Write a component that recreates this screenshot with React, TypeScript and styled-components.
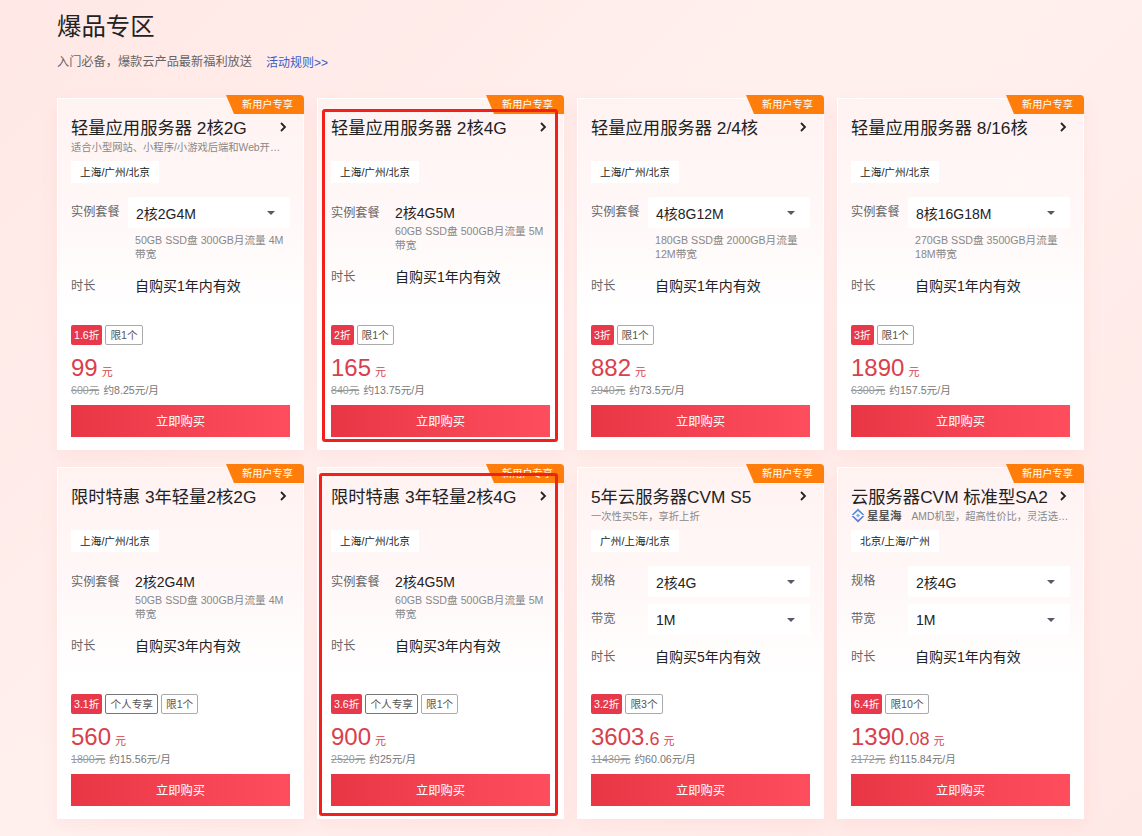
import React from 'react';
import styled, { createGlobalStyle } from 'styled-components';

const GlobalStyle = createGlobalStyle`
  html, body {
    margin: 0;
    padding: 0;
  }
  body {
    font-family: "Liberation Sans", "Noto Sans CJK SC", sans-serif;
    background: #fff;
  }
  * {
    box-sizing: border-box;
  }
`;

const Page = styled.div`
  width: 1142px;
  height: 836px;
  overflow: hidden;
  padding: 12px 0 0 57px;
  background: linear-gradient(135deg, #ffe8e5 0%, #fff0ee 45%, #ffe9e6 100%);
`;

const Heading = styled.h2`
  margin: 0;
  font-size: 24.4px;
  line-height: 30px;
  font-weight: 400;
  color: #222;
`;

const Intro = styled.div`
  display: flex;
  align-items: center;
  margin-top: 10px;
  height: 18px;
  font-size: 12.2px;
  color: #666;
`;

const RuleLink = styled.a`
  margin-left: 14px;
  font-size: 12px;
  color: #3b5bc9;
`;

const Grid = styled.div`
  display: grid;
  grid-template-columns: repeat(4, 247px);
  grid-auto-rows: 352px;
  column-gap: 13px;
  row-gap: 17px;
  margin-top: 28px;
`;

const Card = styled.div`
  position: relative;
  display: flex;
  flex-direction: column;
  padding: 16px 13px 12px;
  background: linear-gradient(180deg, #fff3f2 0%, #fff8f8 35%, #ffffff 60%);
  border: 1px solid #fff;
  box-shadow: 0 6px 16px rgba(240, 150, 145, 0.12);
`;

const Ribbon = styled.div`
  position: absolute;
  top: -4px;
  right: -1px;
  width: 78px;
  height: 19px;
  padding-left: 16px;
  font-size: 10.2px;
  line-height: 19px;
  color: #fff;
  background: #ff7d0a;
  border-radius: 0 4px 0 0;
  clip-path: polygon(0 0, 100% 0, 100% 100%, 8px 100%);
`;

const Frame = styled.div<{ $left: number; $top: number; $right: number; $bottom: number }>`
  position: absolute;
  left: ${(p) => p.$left}px;
  top: ${(p) => p.$top}px;
  right: ${(p) => p.$right}px;
  bottom: ${(p) => p.$bottom}px;
  border: 3px solid #f1201a;
  border-radius: 3px;
  pointer-events: none;
`;

const TitleRow = styled.div`
  display: flex;
  align-items: center;
  justify-content: space-between;
  height: 22px;
  font-size: 17.3px;
  color: #222;
  white-space: nowrap;
`;

const Chevron = styled.svg`
  width: 10px;
  height: 12px;
  margin: 1px 2px 0 0;
  flex: none;
`;

const Subtitle = styled.div`
  display: flex;
  align-items: center;
  height: 14px;
  margin-top: 2px;
  font-size: 10.3px;
  color: #888;
  white-space: nowrap;
`;

const Brand = styled.span`
  display: inline-flex;
  align-items: center;
  gap: 2px;
  margin-right: 10px;
  font-size: 11.5px;
  font-weight: 700;
  color: #555;
  flex: none;
`;

const Region = styled.div`
  align-self: flex-start;
  width: 88px;
  height: 22px;
  margin-top: 8px;
  font-size: 10.65px;
  line-height: 22px;
  text-align: center;
  color: #222;
  background: #fff;
`;

const Specs = styled.div<{ $plain?: boolean }>`
  display: flex;
  flex-direction: column;
  margin-top: ${(p) => (p.$plain ? 15 : 14)}px;
`;

const SpecRow = styled.div<{ $gap: number }>`
  display: flex;
  margin-bottom: ${(p) => p.$gap}px;
`;

const Label = styled.div<{ $wide?: boolean }>`
  flex: none;
  width: ${(p) => (p.$wide ? 64 : 57)}px;
  font-size: 12.2px;
  line-height: 30px;
  color: #666;
`;

const SelectBox = styled.div`
  display: flex;
  align-items: center;
  justify-content: space-between;
  width: 162px;
  height: 31px;
  padding: 0 15px 0 8px;
  font-size: 14px;
  color: #222;
  background: #fff;
  border-radius: 2px;
`;

const Caret = styled.span`
  width: 0;
  height: 0;
  border-left: 4px solid transparent;
  border-right: 4px solid transparent;
  border-top: 4px solid #555b66;
`;

const ValueColumn = styled.div`
  display: flex;
  flex-direction: column;
  padding-top: 7px;
  min-width: 0;
`;

const PlainValue = styled.div`
  font-size: 14px;
  line-height: 16px;
  color: #222;
`;

const Note = styled.div`
  font-size: 10.65px;
  line-height: 14px;
  color: #888;
`;

const SelectNote = styled(Note)`
  margin: -2px 0 10px;
  padding-left: 64px;
`;

const PlainNote = styled(Note)`
  margin-top: 3px;
`;

const Bottom = styled.div`
  margin-top: auto;
`;

const Tags = styled.div`
  display: flex;
  gap: 3px;
`;

const Discount = styled.span`
  height: 20px;
  padding: 0 3px;
  font-size: 10.65px;
  line-height: 20px;
  color: #fff;
  background: #e8394a;
  border-radius: 2px;
`;

const Tag = styled.span<{ $dark?: boolean }>`
  height: 20px;
  padding: 0 4px;
  font-size: 10.65px;
  line-height: 18px;
  color: #555;
  border: 1px solid ${(p) => (p.$dark ? '#777' : '#aaa')};
  border-radius: 2px;
`;

const PriceLine = styled.div`
  display: flex;
  align-items: baseline;
  height: 30px;
  margin-top: 8px;
  color: #d93f4c;
  font-size: 24px;
  line-height: 30px;
`;

const Cents = styled.span`
  font-size: 18px;
`;

const Unit = styled.span`
  margin-left: 4px;
  font-size: 11px;
`;

const PriceNote = styled.div`
  display: flex;
  gap: 4px;
  height: 14px;
  font-size: 10.65px;
  line-height: 14px;
  color: #777;
`;

const OldPrice = styled.span`
  color: #999;
  text-decoration: line-through;
`;

const BuyButton = styled.button`
  display: block;
  width: 100%;
  height: 32px;
  margin-top: 8px;
  padding: 0;
  border: 0;
  font: inherit;
  font-size: 12.3px;
  color: #fff;
  background: linear-gradient(90deg, #e93645 0%, #fe4e5e 100%);
`;

interface Product {
  title: string;
  subtitle?: string;
  brand?: boolean;
  region: string;
  selects?: [string, string][];
  plan?: string;
  note?: string;
  duration: string;
  discount: string;
  personal?: boolean;
  limit: string;
  price: string;
  cents?: string;
  oldPrice: string;
  monthly: string;
  frame?: [number, number, number, number];
}

const LIGHT_REGION = '上海/广州/北京';

const products: Product[] = [
  {
    title: '轻量应用服务器 2核2G',
    subtitle: '适合小型网站、小程序/小游戏后端和Web开…',
    region: LIGHT_REGION,
    selects: [['实例套餐', '2核2G4M']],
    note: '50GB SSD盘 300GB月流量 4M带宽',
    duration: '自购买1年内有效',
    discount: '1.6折',
    limit: '限1个',
    price: '99',
    oldPrice: '600元',
    monthly: '约8.25元/月',
  },
  {
    title: '轻量应用服务器 2核4G',
    region: LIGHT_REGION,
    plan: '2核4G5M',
    note: '60GB SSD盘 500GB月流量 5M带宽',
    duration: '自购买1年内有效',
    discount: '2折',
    limit: '限1个',
    price: '165',
    oldPrice: '840元',
    monthly: '约13.75元/月',
    frame: [4, 10, 5, 7],
  },
  {
    title: '轻量应用服务器 2/4核',
    region: LIGHT_REGION,
    selects: [['实例套餐', '4核8G12M']],
    note: '180GB SSD盘 2000GB月流量 12M带宽',
    duration: '自购买1年内有效',
    discount: '3折',
    limit: '限1个',
    price: '882',
    oldPrice: '2940元',
    monthly: '约73.5元/月',
  },
  {
    title: '轻量应用服务器 8/16核',
    region: LIGHT_REGION,
    selects: [['实例套餐', '8核16G18M']],
    note: '270GB SSD盘 3500GB月流量 18M带宽',
    duration: '自购买1年内有效',
    discount: '3折',
    limit: '限1个',
    price: '1890',
    oldPrice: '6300元',
    monthly: '约157.5元/月',
  },
  {
    title: '限时特惠 3年轻量2核2G',
    region: LIGHT_REGION,
    plan: '2核2G4M',
    note: '50GB SSD盘 300GB月流量 4M带宽',
    duration: '自购买3年内有效',
    discount: '3.1折',
    personal: true,
    limit: '限1个',
    price: '560',
    oldPrice: '1800元',
    monthly: '约15.56元/月',
  },
  {
    title: '限时特惠 3年轻量2核4G',
    region: LIGHT_REGION,
    plan: '2核4G5M',
    note: '60GB SSD盘 500GB月流量 5M带宽',
    duration: '自购买3年内有效',
    discount: '3.6折',
    personal: true,
    limit: '限1个',
    price: '900',
    oldPrice: '2520元',
    monthly: '约25元/月',
    frame: [1, 5, 5, 2],
  },
  {
    title: '5年云服务器CVM S5',
    subtitle: '一次性买5年，享折上折',
    region: '广州/上海/北京',
    selects: [
      ['规格', '2核4G'],
      ['带宽', '1M'],
    ],
    duration: '自购买5年内有效',
    discount: '3.2折',
    limit: '限3个',
    price: '3603',
    cents: '.6',
    oldPrice: '11430元',
    monthly: '约60.06元/月',
  },
  {
    title: '云服务器CVM 标准型SA2',
    subtitle: 'AMD机型，超高性价比，灵活选…',
    brand: true,
    region: '北京/上海/广州',
    selects: [
      ['规格', '2核4G'],
      ['带宽', '1M'],
    ],
    duration: '自购买1年内有效',
    discount: '6.4折',
    limit: '限10个',
    price: '1390',
    cents: '.08',
    oldPrice: '2172元',
    monthly: '约115.84元/月',
  },
];

const BrandMark = () => (
  <svg width="14" height="15" viewBox="0 0 14 15">
    <path d="M7 0.5 L13.5 7 L11.4 7 L7 3 L2.6 7 L0.5 7 Z" fill="#4f8fe0" />
    <path d="M0.5 8 L7 14.5 L13.5 8 L11.4 8 L7 12 L2.6 8 Z" fill="#5b7fd8" />
    <path d="M7 5.5 L9 7.5 L7 9.5 L5 7.5 Z" fill="#6fb3ea" />
  </svg>
);

const ProductCard = ({ product }: { product: Product }) => {
  const { selects, frame } = product;

  return (
    <Card>
      <Ribbon>新用户专享</Ribbon>
      <TitleRow>
        {product.title}
        <Chevron viewBox="0 0 10 12">
          <path d="M3 2 L7 6 L3 10" fill="none" stroke="#222" strokeWidth="1.8" />
        </Chevron>
      </TitleRow>
      <Subtitle>
        {product.brand && (
          <Brand>
            <BrandMark />
            星星海
          </Brand>
        )}
        {product.subtitle}
      </Subtitle>
      <Region>{product.region}</Region>
      <Specs $plain={!!product.plan}>
        {selects &&
          selects.map(([label, value]) => (
            <SpecRow key={label} $gap={7}>
              <Label>{label}</Label>
              <SelectBox>
                {value}
                <Caret />
              </SelectBox>
            </SpecRow>
          ))}
        {selects && product.note && <SelectNote>{product.note}</SelectNote>}
        {product.plan && (
          <SpecRow $gap={10}>
            <Label $wide>实例套餐</Label>
            <ValueColumn>
              <PlainValue>{product.plan}</PlainValue>
              <PlainNote>{product.note}</PlainNote>
            </ValueColumn>
          </SpecRow>
        )}
        <SpecRow $gap={0}>
          <Label $wide>时长</Label>
          <ValueColumn>
            <PlainValue>{product.duration}</PlainValue>
          </ValueColumn>
        </SpecRow>
      </Specs>
      <Bottom>
        <Tags>
          <Discount>{product.discount}</Discount>
          {product.personal && <Tag $dark>个人专享</Tag>}
          <Tag>{product.limit}</Tag>
        </Tags>
        <PriceLine>
          {product.price}
          {product.cents && <Cents>{product.cents}</Cents>}
          <Unit>元</Unit>
        </PriceLine>
        <PriceNote>
          <OldPrice>{product.oldPrice}</OldPrice>
          {product.monthly}
        </PriceNote>
        <BuyButton>立即购买</BuyButton>
      </Bottom>
      {frame && <Frame $left={frame[0]} $top={frame[1]} $right={frame[2]} $bottom={frame[3]} />}
    </Card>
  );
};

const App = () => (
  <Page>
    <GlobalStyle />
    <Heading>爆品专区</Heading>
    <Intro>
      入门必备，爆款云产品最新福利放送
      <RuleLink>活动规则&gt;&gt;</RuleLink>
    </Intro>
    <Grid>
      {products.map((product) => (
        <ProductCard key={product.title} product={product} />
      ))}
    </Grid>
  </Page>
);

export default App;
